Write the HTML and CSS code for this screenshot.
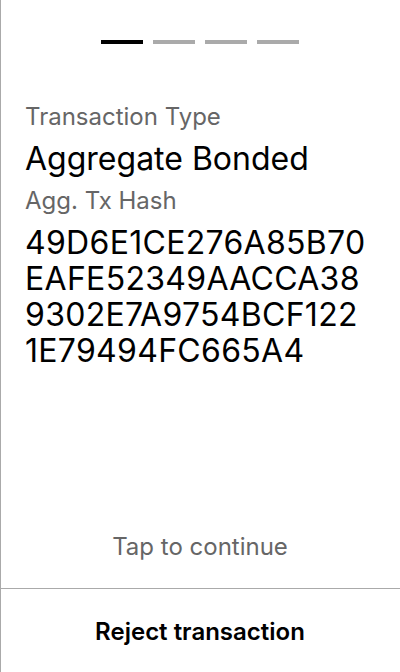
FILE: index.html
```html
<!DOCTYPE html>
<html>
<head>
<meta charset="utf-8">
<link rel="stylesheet" href="styles.css">
</head>
<body>
<div class="screen">
  <div class="main">
    <div class="steps">
      <span class="step active"></span>
      <span class="step"></span>
      <span class="step"></span>
      <span class="step"></span>
    </div>
    <div class="content">
      <div class="label">Transaction Type</div>
      <div class="value">Aggregate Bonded</div>
      <div class="label">Agg. Tx Hash</div>
      <div class="value hash">49D6E1CE276A85B70<br>EAFE52349AACCA38<br>9302E7A9754BCF122<br>1E79494FC665A4</div>
    </div>
    <div class="tap">Tap to continue</div>
  </div>
  <div class="footer">Reject transaction</div>
</div>
</body>
</html>
```
FILE: styles.css
```css
html, body {
  margin: 0;
  padding: 0;
  background: #fff;
}
body {
  font-family: Inter, "Noto Sans", sans-serif;
  color: #000;
}
.screen {
  height: 672px;
  border-left: 1px solid #aaa;
  box-sizing: border-box;
  display: flex;
  flex-direction: column;
}
.main {
  flex: 1;
  display: flex;
  flex-direction: column;
}
.steps {
  display: flex;
  justify-content: center;
  gap: 10px;
  padding-top: 40px;
  padding-right: 1px;
}
.step {
  width: 42px;
  height: 4px;
  background: #aaa;
}
.step.active {
  background: #000;
}
.content {
  padding: 57px 24px 0 24px;
}
.label {
  font-size: 24px;
  line-height: 32px;
  color: #666;
  margin-bottom: 8px;
}
.value {
  font-size: 32px;
  line-height: 36px;
  margin-bottom: 8px;
}
.hash {
  letter-spacing: 0.3px;
}
.tap {
  margin-top: auto;
  text-align: center;
  font-size: 24px;
  line-height: 28px;
  color: #666;
  padding-bottom: 27px;
  padding-right: 1px;
}
.footer {
  height: 84px;
  border-top: 1px solid #aaa;
  display: flex;
  align-items: center;
  justify-content: center;
  font-size: 24px;
  font-weight: 600;
  padding-top: 2px;
  box-sizing: border-box;
  padding-right: 1px;
}
```
